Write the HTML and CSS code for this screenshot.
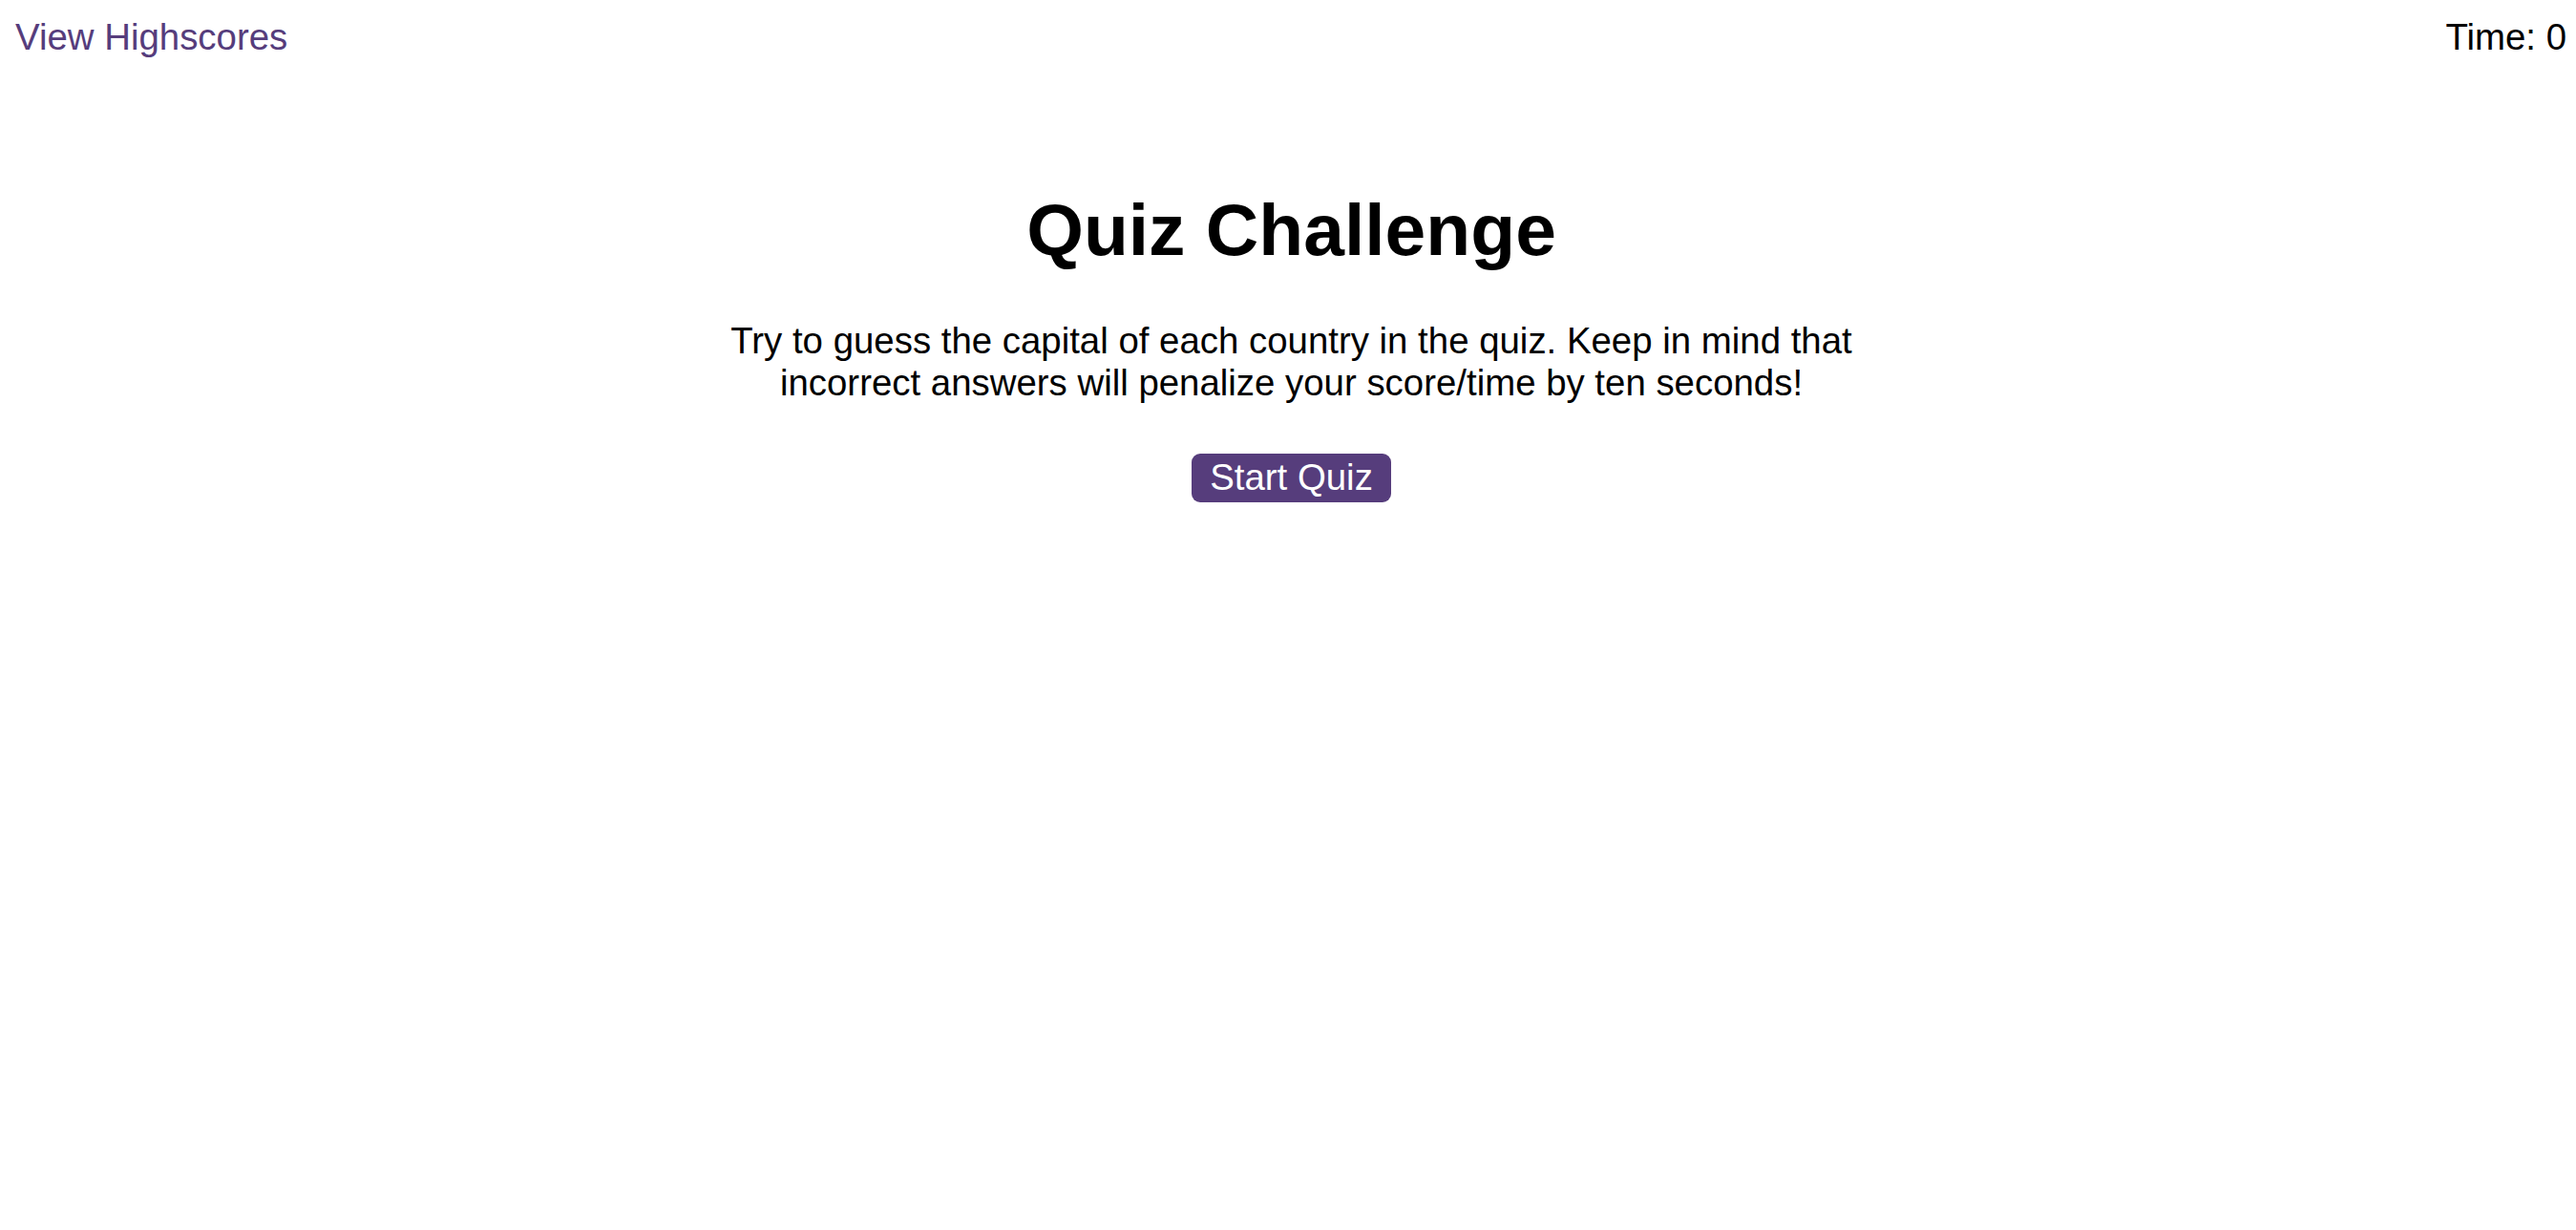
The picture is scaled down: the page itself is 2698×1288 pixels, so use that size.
FILE: index.html
```html
<!DOCTYPE html>
<html lang="en">
<head>
<meta charset="utf-8">
<title>Quiz Challenge</title>
<link rel="stylesheet" href="styles.css">
</head>
<body>
<header class="top-bar">
  <a class="highscores-link" href="#">View Highscores</a>
  <div class="timer">Time: <span class="timer-value">0</span></div>
</header>
<main class="intro">
  <h1 class="intro-title">Quiz Challenge</h1>
  <p class="intro-text">Try to guess the capital of each country in the quiz. Keep in mind that incorrect answers will penalize your score/time by ten seconds!</p>
  <button class="start-button" type="button">Start Quiz</button>
</main>
</body>
</html>
```

FILE: styles.css
```css
html, body {
  margin: 0;
  padding: 0;
  background: #ffffff;
}

body {
  font-family: "Liberation Sans", Arial, Helvetica, sans-serif;
  font-size: 38.4px;
  color: #000000;
}

.top-bar {
  display: flex;
  justify-content: space-between;
  align-items: flex-start;
  padding: 16.5px 10px 0 16px;
}

.highscores-link {
  color: #563d7c;
  text-decoration: none;
}

.timer {
  color: #000000;
}

.intro {
  display: flex;
  flex-direction: column;
  align-items: center;
  text-align: center;
  padding-left: 7px;
}

.intro-title {
  font-size: 76.8px;
  font-weight: bold;
  margin: 135px 0 50px;
}

.intro-text {
  max-width: 1214px;
  margin: 0 0 52px;
}

.start-button {
  font-family: inherit;
  font-size: 38.4px;
  color: #ffffff;
  background: #563d7c;
  border: none;
  border-radius: 9px;
  padding: 3.5px 19.6px;
  cursor: pointer;
}
```
